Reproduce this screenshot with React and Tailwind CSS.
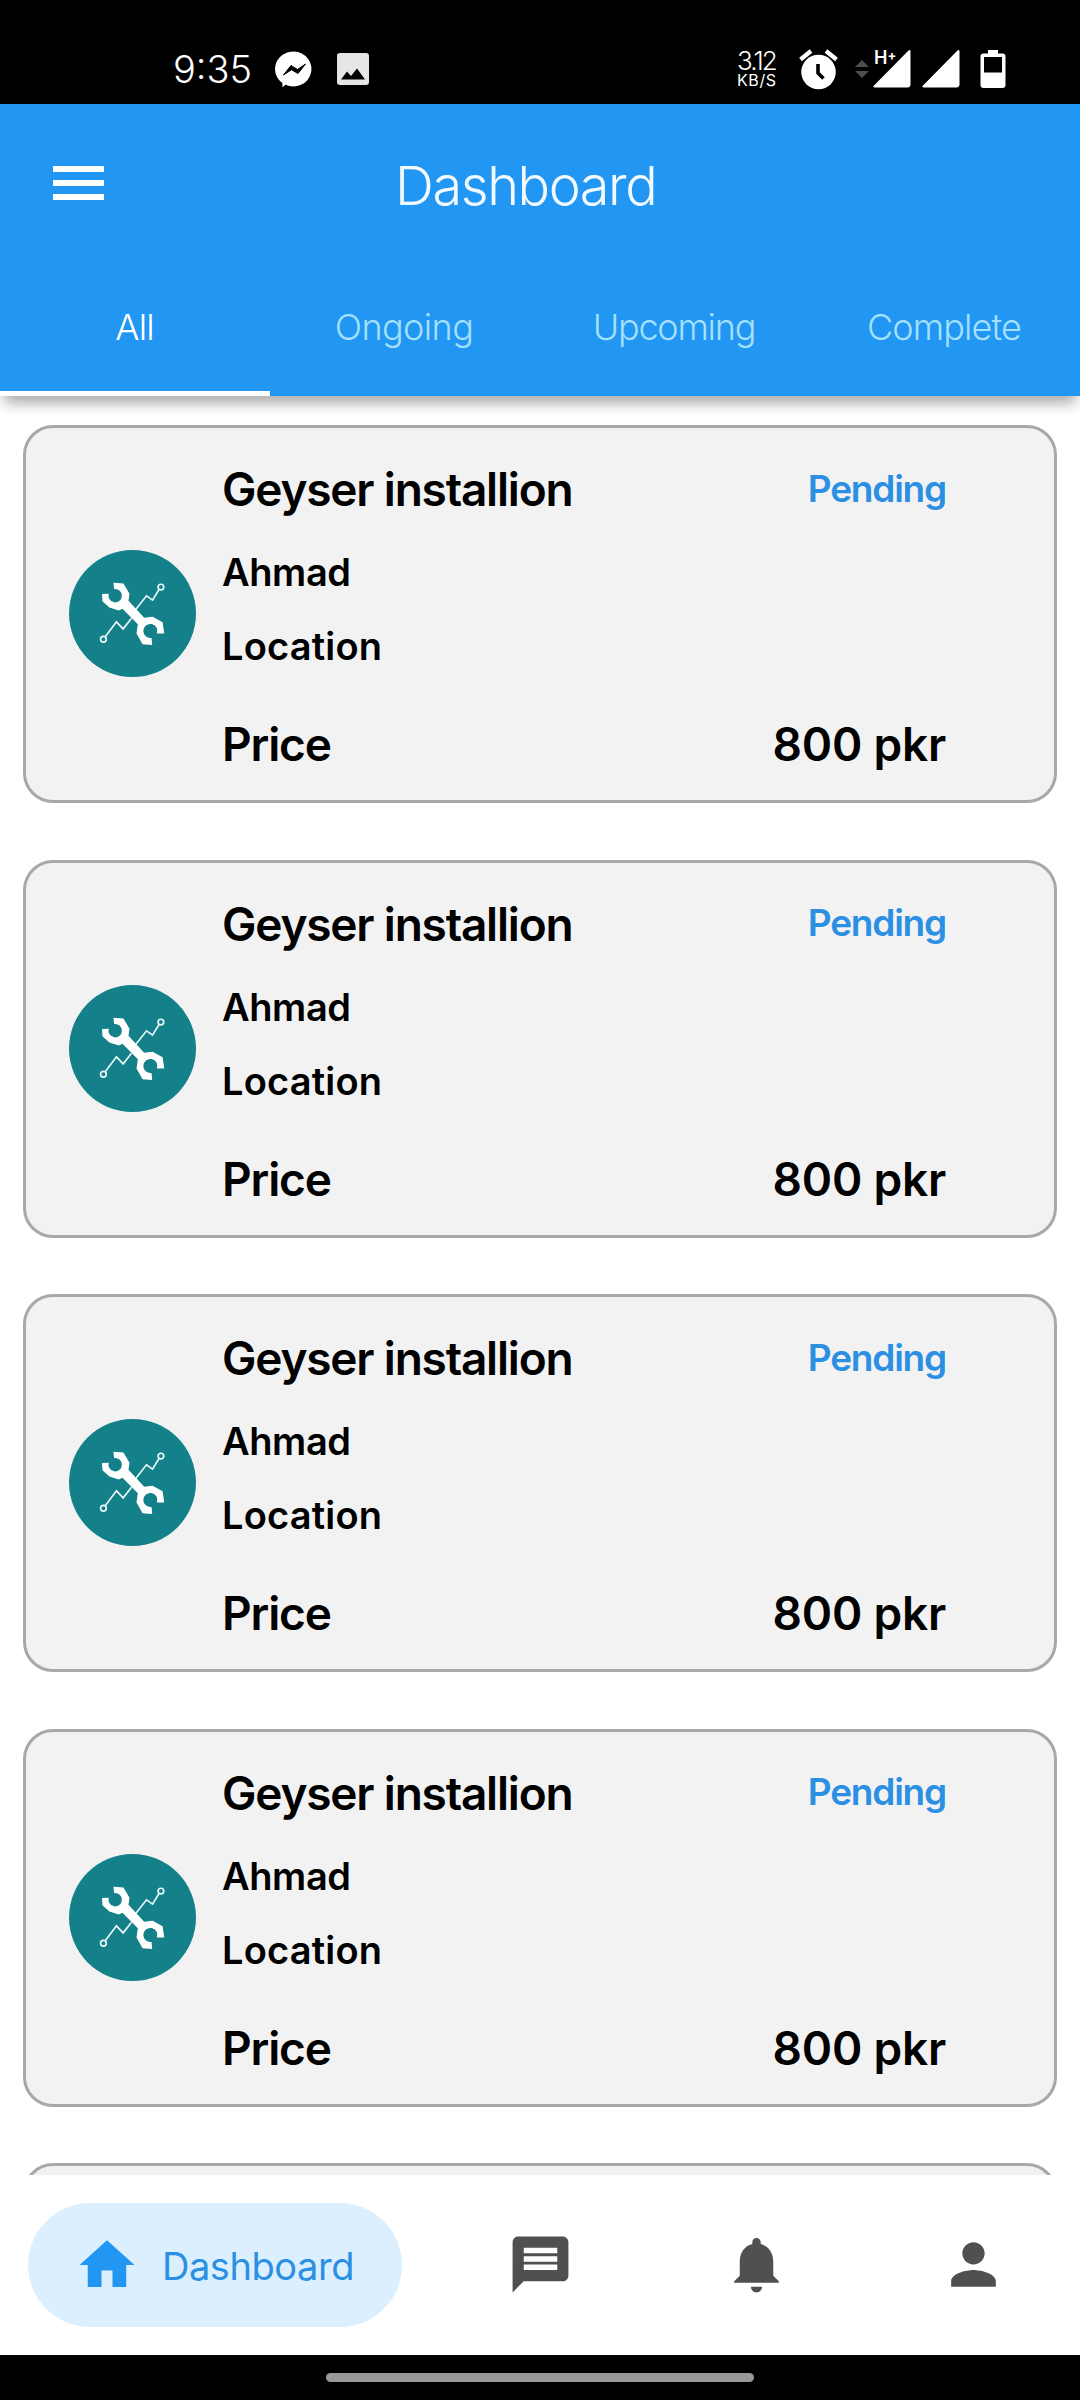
const TABS = [
  { label: 'All', active: true, tracking: 'tracking-[-0.9px]' },
  { label: 'Ongoing', tracking: 'tracking-[-0.6px]' },
  { label: 'Upcoming', tracking: 'tracking-[-1.25px]' },
  { label: 'Complete', tracking: 'tracking-[-0.9px]' },
];

const JOBS = [1, 2, 3, 4].map((id) => ({
  id,
  title: 'Geyser installion',
  status: 'Pending',
  customer: 'Ahmad',
  place: 'Location',
  price: '800 pkr',
}));

function StatusBar() {
  return (
    <div className="flex h-[104px] shrink-0 items-start bg-black text-white">
      <span className="ml-[173px] mt-[44px] w-[80px] text-[38px] font-light leading-[50px]">9:35</span>
      <svg className="ml-[22px] mt-[50px] h-[38px] w-[38px]" viewBox="0 0 38 38">
        <path d="M19 1.500a18 17.500 0 1 1-8.500 33.200L7.500 37.300 7.300 33A18 17.500 0 0 1 19 1.500z" fill="#fff" />
        <path d="M8.500 25 16 15.500l6.500 4L30.500 14 23 23.500l-6.500-3.800z" fill="#000" stroke="#000" strokeWidth="1" />
      </svg>
      <svg className="ml-[23px] mt-[53px] h-[32px] w-[33px]" viewBox="0 0 33 32">
        <rect x="1" width="32" height="32" rx="3" fill="#e6e6e6" />
        <path d="M5 26.500 11 18.500l4 4.500 6-7.500 8 11z" fill="#000" />
      </svg>
      <div className="ml-[368px] mt-[48px] flex w-[43px] flex-col">
        <span className="h-[25px] text-[26px] font-light leading-[26px] tracking-[-1.9px]">3.12</span>
        <span className="text-[16px] font-normal leading-[14px] tracking-[0.6px]">KB/S</span>
      </div>
      <svg className="ml-[18px] mt-[48px] h-[42px] w-[42px]" viewBox="0 0 42 42">
        <circle cx="20.500" cy="24" r="17.300" fill="#fff" />
        <path d="M2.500 11.500 13 3M28 3l10.500 8.500" stroke="#fff" strokeWidth="4.200" fill="none" />
        <path d="M20 16v9l5.500 5.500" stroke="#000" strokeWidth="3.600" fill="none" />
      </svg>
      <svg className="ml-[15px] mt-[59px] h-[20px] w-[14px]" viewBox="0 0 14 20">
        <path d="M0 8 7 1l7 7zM0 12h14l-7 7z" fill="#4d4d4d" />
      </svg>
      <div className="relative ml-[4px] mt-[49px] h-[40px] w-[38px]">
        <svg className="h-[40px] w-[38px]" viewBox="0 0 38 40">
          <path d="M37.500 2.500v33a3.500 3 0 0 1-3 3H2c-2 0-2-1-1-2L35 2c1.500-1.500 2.500-1 2.500.5z" fill="#fff" />
        </svg>
        <span className="absolute left-[1px] top-[-1px] whitespace-nowrap text-[18px] font-semibold leading-[19px]">
          H<span className="relative top-[-4px] text-[13px] font-bold">+</span>
        </span>
      </div>
      <svg className="ml-[11px] mt-[49px] h-[40px] w-[38px]" viewBox="0 0 38 40">
        <path d="M37.500 2.500v33a3.500 3 0 0 1-3 3H2c-2 0-2-1-1-2L35 2c1.500-1.500 2.500-1 2.500.5z" fill="#fff" />
      </svg>
      <svg className="ml-[20px] mt-[50px] h-[38px] w-[26px]" viewBox="0 0 26 38">
        <path d="M8 0h10v3.500h4.500a3 3 0 0 1 3 3V35a3 3 0 0 1-3 3h-19a3 3 0 0 1-3-3V6.500a3 3 0 0 1 3-3H8z" fill="#fff" />
        <rect x="4" y="7" width="18" height="15.500" fill="#000" />
      </svg>
    </div>
  );
}

function Header() {
  return (
    <header className="relative z-10 flex h-[292px] shrink-0 flex-col bg-[#2196f3] shadow-[0_13px_13px_-5px_rgba(0,0,0,0.27),0_2px_14px_rgba(0,0,0,0.1)]">
      <div className="flex h-[163px] items-start">
        <div className="ml-[53px] mt-[62px] flex w-[51px] flex-col gap-[8px]">
          <span className="h-[6px] bg-white" />
          <span className="h-[6px] bg-white" />
          <span className="h-[6px] bg-white" />
        </div>
        <h1 className="ml-[291px] mt-[51px] text-[54px] font-[350] leading-[61px] tracking-[-1.4px] text-[#f2faff]">
          Dashboard
        </h1>
      </div>
      <nav className="grid h-[129px] grid-cols-4">
        {TABS.map((tab) => (
          <div
            key={tab.label}
            className={
              tab.active
                ? 'flex justify-center border-b-[5px] border-white pr-[1px] pt-[36px] text-white'
                : 'flex justify-center pr-[2px] pt-[36px] text-[#a5e0fc]'
            }
          >
            <span className={'h-[48px] text-[36px] font-[350] leading-[48px] ' + tab.tracking}>{tab.label}</span>
          </div>
        ))}
      </nav>
    </header>
  );
}

function ServiceBadge() {
  return (
    <svg className="h-[127px] w-[127px]" viewBox="27 31 380 380">
      <circle cx="217" cy="221" r="190" fill="#13808a" />
      <g fill="none" stroke="#e9f7f7" strokeWidth="5">
        <circle cx="130" cy="298" r="8.500" />
        <path d="M136 290 169 246 189 267 214 235M226 210 259 168 277 181 296 150" />
        <circle cx="302" cy="142" r="8.500" />
      </g>
      <path
        d="M160 129 190 131 208 162 205 183 252 234 277 231 307 247 312 281 290 281A21 21 0 1 0 274 294L276 315 247 313 229 281 233 253 187 207 176 212 148 203 127 184 126 163 146 162A20 20 0 1 0 162 148Z"
        fill="#fff"
      />
    </svg>
  );
}

function Card({ children }) {
  return (
    <article className="flex h-[378px] w-[1034px] shrink-0 rounded-[30px] border-[3px] border-[#a8a8a8] bg-[#f2f2f2] text-black">
      {children}
    </article>
  );
}

function JobCard({ job }) {
  return (
    <Card>
      <div className="flex w-[196px] items-center pb-[1px] pl-[42.500px]">
        <ServiceBadge />
      </div>
      <div className="flex flex-1 flex-col pr-[108px] pt-[31px] font-semibold">
        <div className="flex h-[60px] items-center justify-between">
          <h2 className="text-[46px] leading-[60px] tracking-[-1.200px]">{job.title}</h2>
          <span className="-mt-[2px] text-[37px] leading-[57px] tracking-[-1.200px] text-[#2b8fe4]">{job.status}</span>
        </div>
        <p className="mt-[16px] text-[38px] leading-[74px] tracking-[-0.4px]">{job.customer}</p>
        <p className="text-[38px] leading-[74px] tracking-[0.200px]">{job.place}</p>
        <div className="mt-[31px] flex h-[60px] justify-between text-[46px] leading-[60px]">
          <span className="tracking-[-1.100px]">Price</span>
          <span className="tracking-[-0.200px]">{job.price}</span>
        </div>
      </div>
    </Card>
  );
}

function NavIcon({ d }) {
  return (
    <div className="flex justify-center">
      <svg className="h-[67px] w-[67px]" viewBox="0 0 24 24" fill="#505050">
        <path d={d} />
      </svg>
    </div>
  );
}

function BottomNav() {
  return (
    <nav className="flex h-[180px] shrink-0 items-center bg-white">
      <div className="ml-[28px] flex h-[124px] w-[374px] items-center rounded-full bg-[#dbeffe]">
        <svg className="ml-[46px] h-[66px] w-[66px]" viewBox="0 0 24 24" fill="#2196f3">
          <path d="M10 20v-6h4v6h5v-8h3L12 3 2 12h3v8z" />
        </svg>
        <span className="ml-[22px] mt-[3px] text-[38px] font-normal tracking-[-0.45px] text-[#2b8fe4]">Dashboard</span>
      </div>
      <div className="ml-[30px] mb-[2px] -mr-[2px] grid w-[650px] shrink-0 grid-cols-3">
        <NavIcon d="M20 2H4c-1.100 0-1.990.9-1.990 2L2 22l4-4h14c1.100 0 2-.9 2-2V4c0-1.100-.9-2-2-2zm-2 12H6v-2h12v2zm0-3H6V9h12v2zm0-3H6V6h12v2z" />
        <NavIcon d="M12 22c1.100 0 2-.9 2-2h-4c0 1.100.89 2 2 2zm6-6v-5c0-3.070-1.640-5.640-4.500-6.320V4c0-.83-.67-1.500-1.500-1.500s-1.500.67-1.500 1.500v.68C7.630 5.360 6 7.920 6 11v5l-2 2v.5h16V18l-2-2z" />
        <NavIcon d="M12 12c2.210 0 4-1.790 4-4s-1.790-4-4-4-4 1.790-4 4 1.790 4 4 4zm0 2c-2.670 0-8 1.340-8 4v2h16v-2c0-2.660-5.330-4-8-4z" />
      </div>
    </nav>
  );
}

export default function App() {
  return (
    <div className="flex h-[2400px] w-[1080px] flex-col overflow-hidden bg-white font-['Inter',sans-serif]">
      <StatusBar />
      <Header />
      <main className="flex min-h-0 flex-1 flex-col items-center gap-[56.600px] overflow-hidden pt-[29px]">
        {JOBS.map((job) => (
          <JobCard key={job.id} job={job} />
        ))}
        <Card />
      </main>
      <BottomNav />
      <div className="flex h-[45px] shrink-0 justify-center bg-black pt-[18px]">
        <div className="h-[9px] w-[428px] rounded-full bg-[#999999]" />
      </div>
    </div>
  );
}
